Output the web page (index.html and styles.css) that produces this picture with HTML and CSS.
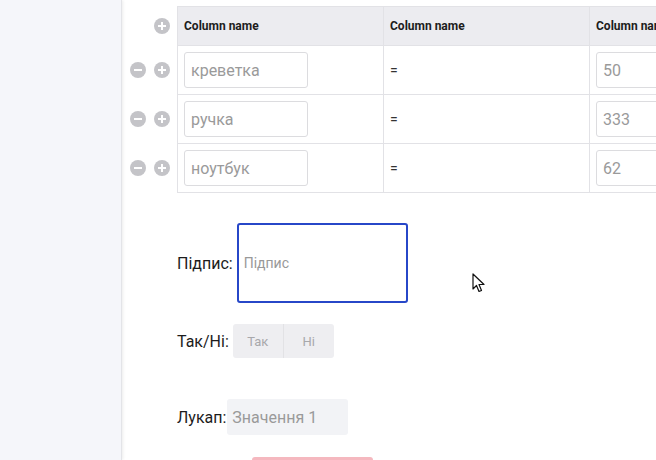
FILE: index.html
```html
<!DOCTYPE html>
<html lang="uk">
<head>
<meta charset="utf-8">
<link rel="stylesheet" href="styles.css">
</head>
<body>
<div class="layout">
  <aside class="sidebar"></aside>
  <main class="main">
    <table class="grid">
      <thead>
        <tr>
          <th class="ctl"><span class="ctl-wrap"><span class="icon-spacer"></span><span class="icon plus"></span></span></th>
          <th class="col">Column name</th>
          <th class="col">Column name</th>
          <th class="col">Column name</th>
        </tr>
      </thead>
      <tbody>
        <tr>
          <td class="ctl"><span class="ctl-wrap"><span class="icon minus"></span><span class="icon plus"></span></span></td>
          <td class="col"><div class="inp">креветка</div></td>
          <td class="col eq">=</td>
          <td class="col"><div class="inp">50</div></td>
        </tr>
        <tr>
          <td class="ctl"><span class="ctl-wrap"><span class="icon minus"></span><span class="icon plus"></span></span></td>
          <td class="col"><div class="inp">ручка</div></td>
          <td class="col eq">=</td>
          <td class="col"><div class="inp">333</div></td>
        </tr>
        <tr>
          <td class="ctl"><span class="ctl-wrap"><span class="icon minus"></span><span class="icon plus"></span></span></td>
          <td class="col"><div class="inp">ноутбук</div></td>
          <td class="col eq">=</td>
          <td class="col"><div class="inp">62</div></td>
        </tr>
      </tbody>
    </table>

    <div class="form">
      <div class="field f-sign">
        <span class="lbl">Підпис:</span>
        <div class="textarea">Підпис</div>
      </div>
      <div class="field f-toggle">
        <span class="lbl">Так/Ні:</span>
        <div class="toggle"><span class="tbtn">Так</span><span class="tbtn">Ні</span></div>
      </div>
      <div class="field f-lookup">
        <span class="lbl">Лукап:</span>
        <div class="select">Значення 1</div>
      </div>
      <div class="submit"></div>
    </div>

    <svg class="cursor" width="14" height="21" viewBox="0 0 14 21">
      <path d="M1 1 L1 16 L4.5 12.5 L7 18.5 L9.5 17.5 L7 11.5 L12 11.5 Z" fill="#fff" stroke="#111" stroke-width="1.2" stroke-linejoin="round"/>
    </svg>
  </main>
</div>
</body>
</html>
```

FILE: styles.css
```css
html, body {
  margin: 0;
  padding: 0;
  width: 656px;
  height: 460px;
  overflow: hidden;
  font-family: Roboto, "Noto Sans", Arial, sans-serif;
  color: #222;
}

.layout {
  display: flex;
  height: 460px;
}

.sidebar {
  width: 121px;
  flex: none;
  background: #f5f6fa;
  border-right: 1px solid #e3e4e8;
  box-shadow: 1px 0 3px rgba(0,0,0,0.08);
  position: relative;
  z-index: 1;
}

.main {
  flex: 1;
  background: #fff;
  padding-top: 6px;
  position: relative;
  min-width: 0;
  overflow: hidden;
}

.grid {
  border-collapse: collapse;
  table-layout: fixed;
  width: 673px;
}

.grid .ctl {
  width: 55px;
  padding: 0;
  border: none;
  background: #fff;
}

.ctl-wrap {
  display: flex;
  gap: 8px;
  padding-left: 8px;
  align-items: center;
}

.icon, .icon-spacer {
  width: 16px;
  height: 16px;
  border-radius: 50%;
  flex: none;
  position: relative;
}

.icon { background: #c4c4c8; }

.icon::before, .icon::after {
  content: "";
  position: absolute;
  background: #fff;
  left: 4px;
  top: 7px;
  width: 8px;
  height: 2px;
}

.icon.plus::after {
  left: 7px;
  top: 4px;
  width: 2px;
  height: 8px;
}

.icon.minus::after { display: none; }

.grid .col {
  width: 193px;
  border: 1px solid #e2e2e6;
  padding: 0 6px;
  text-align: left;
}

.grid thead .col {
  background: #ececf0;
  height: 38px;
  font-size: 12px;
  font-weight: 700;
  color: #1c1c1c;
  white-space: nowrap;
  overflow: hidden;
}

.grid tbody .col {
  height: 48px;
}

.grid .eq {
  font-size: 14px;
  color: #333;
}

.inp {
  width: 124px;
  height: 36px;
  box-sizing: border-box;
  border: 1px solid #dcdcdf;
  border-radius: 3px;
  padding-left: 6px;
  font-size: 16px;
  color: #9a9a9a;
  display: flex;
  align-items: center;
}

.form {
  padding-left: 55px;
  padding-top: 30px;
}

.field {
  display: flex;
  align-items: center;
  gap: 4px;
}

.lbl {
  font-size: 16px;
  color: #1c1c1c;
}

.textarea {
  width: 171px;
  height: 80px;
  box-sizing: border-box;
  border: 2px solid #2747c8;
  border-radius: 3px;
  padding-left: 5px;
  font-size: 14px;
  color: #999;
  display: flex;
  align-items: center;
}

.f-toggle { margin-top: 21px; }

.toggle {
  display: flex;
  border-radius: 3px;
  overflow: hidden;
  background: #eeeef1;
}

.tbtn {
  width: 50px;
  height: 34px;
  display: flex;
  align-items: center;
  justify-content: center;
  font-size: 13px;
  color: #a8a8ab;
}

.tbtn + .tbtn { border-left: 1px solid #e2e2e5; }

.f-lookup {
  margin-top: 41px;
  gap: 1px;
}

.select {
  width: 121px;
  height: 36px;
  box-sizing: border-box;
  background: #f2f3f6;
  border-radius: 3px;
  padding-left: 5px;
  font-size: 16px;
  color: #9a9a9a;
  display: flex;
  align-items: center;
}

.submit {
  margin-top: 22px;
  margin-left: 75px;
  width: 121px;
  height: 36px;
  background: #f5b8bf;
  border-radius: 3px;
}

.cursor {
  position: absolute;
  left: 350px;
  top: 273px;
}
```
